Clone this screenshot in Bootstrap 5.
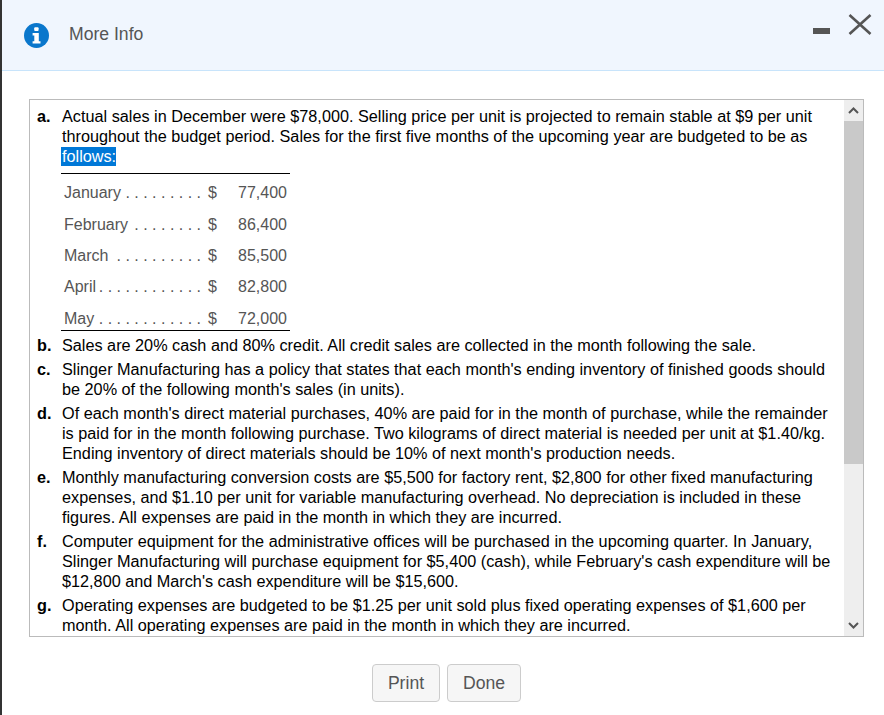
<!DOCTYPE html>
<html lang="en">
<head>
<meta charset="UTF-8">
<meta name="viewport" content="width=device-width, initial-scale=1.0">
<title>More Info</title>
<link href="https://cdn.jsdelivr.net/npm/bootstrap@5.3.3/dist/css/bootstrap.min.css" rel="stylesheet">
<style>
html, body { height: 100%; }
body { font-family: "Liberation Sans", Arial, sans-serif; font-size: 16.24px; line-height: 20px; color: #000; background: #fff; border-left: 2px solid #333; overflow: hidden; }
.info-head { height: 71px; background: #f0f6fe; border-bottom: 1px solid #c8e4fb; padding-left: 22px; padding-right: 12px; }
.info-title { font-size: 17.6px; color: #555; margin-left: 20px; margin-top: -2px; }
.win-btn { background: none; border: 0; padding: 0; line-height: 0; }
.win-group { margin-bottom: 21px; }
.win-min { margin-top: 14px; }
.win-close { margin-left: 18px; }
.scroll-box { height: 538px; margin: 28px 20px 0 27px; border: 1px solid #bbb; }
.scroll-body { padding: 6px 2px 0 7px; }
.item-row { margin-bottom: 4px; }
.item-key { flex: 0 0 25px; font-weight: 700; }
.picked { background: #0078d7; color: #fff; display: inline-block; height: 19px; line-height: 19px; margin-left: -1px; padding-left: 1px; }
.sales-table { width: 229px; margin: 7px 0 0 -1px; border-top: 1px solid #000; border-bottom: 1px solid #000; color: #555; font-size: 16px; border-collapse: separate; border-spacing: 0; }
.sales-table td { height: 31px; padding: 6px 0 0; vertical-align: middle; white-space: nowrap; }
.sales-table tr:first-child td { height: 32px; }
.sales-table tr:last-child td { padding-top: 8px; }
.sales-name { width: 144px; padding-left: 3px !important; padding-right: 4px !important; }
.sales-cur { width: 30px; padding-left: 3px !important; }
.sales-amt { text-align: right; padding-right: 3px !important; }
.fake-bar { flex: 0 0 19px; background: #eee; }
.bar-arrow { height: 21px; }
.bar-thumb { height: 343px; background: #c9c9c9; }
.foot-btn { font-family: inherit; font-size: 17.6px; line-height: 20px; color: #555; background: #f6f6f6; border: 1px solid #ccc; border-radius: 4px; padding: 8px 15px; height: 38px; }
.foot-btn:hover { color: #555; background: #f6f6f6; border-color: #ccc; }
.foot-row { margin-top: 27px; padding-left: 7px; gap: 7px; }
</style>
</head>
<body>

<!-- header -->
<div class="info-head d-flex align-items-center">
  <svg width="25" height="25" viewBox="0 0 25 25">
    <circle cx="12.5" cy="12.5" r="12.5" fill="#0a77cc"/>
    <rect x="10.2" y="4.2" width="4.4" height="3.8" rx="1" fill="#fff"/>
    <path d="M8.6 10h6.2v8.2h1.7v2.4H8.6v-2.4h1.7v-5.8H8.6z" fill="#fff"/>
  </svg>
  <div class="info-title">More Info</div>
  <div class="win-group ms-auto d-flex align-items-start">
    <button class="win-btn win-min" type="button" aria-label="Minimize">
      <svg width="17" height="6" viewBox="0 0 17 6"><rect width="17" height="6" fill="#555"/></svg>
    </button>
    <button class="win-btn win-close" type="button" aria-label="Close">
      <svg width="24" height="21" viewBox="0 0 24 21"><path d="M1.500 1l21 19M22.500 1l-21 19" stroke="#555" stroke-width="2.600" fill="none"/></svg>
    </button>
  </div>
</div>

<!-- scrolling text -->
<div class="scroll-box d-flex">
  <div class="scroll-body flex-grow-1 overflow-hidden">
    <div class="item-row d-flex">
      <div class="item-key">a.</div>
      <div>
        Actual sales in December were $78,000. Selling price per unit is projected to remain stable at $9 per unit throughout the budget period. Sales for the first five months of the upcoming year are budgeted to be as <span class="picked">follows:</span>
        <table class="sales-table">
          <tr><td class="sales-name"><div class="d-flex justify-content-between"><span>January</span><span>. . . . . . . . .</span></div></td><td class="sales-cur">$</td><td class="sales-amt">77,400</td></tr>
          <tr><td class="sales-name"><div class="d-flex justify-content-between"><span>February</span><span>. . . . . . . .</span></div></td><td class="sales-cur">$</td><td class="sales-amt">86,400</td></tr>
          <tr><td class="sales-name"><div class="d-flex justify-content-between"><span>March</span><span>. . . . . . . . . .</span></div></td><td class="sales-cur">$</td><td class="sales-amt">85,500</td></tr>
          <tr><td class="sales-name"><div class="d-flex justify-content-between"><span>April</span><span>. . . . . . . . . . . .</span></div></td><td class="sales-cur">$</td><td class="sales-amt">82,800</td></tr>
          <tr><td class="sales-name"><div class="d-flex justify-content-between"><span>May</span><span>. . . . . . . . . . . .</span></div></td><td class="sales-cur">$</td><td class="sales-amt">72,000</td></tr>
        </table>
      </div>
    </div>
    <div class="item-row d-flex"><div class="item-key">b.</div><div>Sales are 20% cash and 80% credit. All credit sales are collected in the month following the sale.</div></div>
    <div class="item-row d-flex"><div class="item-key">c.</div><div>Slinger Manufacturing has a policy that states that each month's ending inventory of finished goods should be 20% of the following month's sales (in units).</div></div>
    <div class="item-row d-flex"><div class="item-key">d.</div><div>Of each month's direct material purchases, 40% are paid for in the month of purchase, while the remainder is paid for in the month following purchase. Two kilograms of direct material is needed per unit at $1.40/kg. Ending inventory of direct materials should be 10% of next month's production needs.</div></div>
    <div class="item-row d-flex"><div class="item-key">e.</div><div>Monthly manufacturing conversion costs are $5,500 for factory rent, $2,800 for other fixed manufacturing expenses, and $1.10 per unit for variable manufacturing overhead. No depreciation is included in these figures. All expenses are paid in the month in which they are incurred.</div></div>
    <div class="item-row d-flex"><div class="item-key">f.</div><div>Computer equipment for the administrative offices will be purchased in the upcoming quarter. In January, Slinger Manufacturing will purchase equipment for $5,400 (cash), while February's cash expenditure will be $12,800 and March's cash expenditure will be $15,600.</div></div>
    <div class="item-row d-flex"><div class="item-key">g.</div><div>Operating expenses are budgeted to be $1.25 per unit sold plus fixed operating expenses of $1,600 per month. All operating expenses are paid in the month in which they are incurred.</div></div>
  </div>
  <div class="fake-bar d-flex flex-column">
    <div class="bar-arrow d-flex align-items-center justify-content-center">
      <svg width="11" height="7" viewBox="0 0 11 7"><path d="M1 6l4.500-4.500L10 6" stroke="#555" stroke-width="2" fill="none"/></svg>
    </div>
    <div class="bar-thumb"></div>
    <div class="mt-auto bar-arrow d-flex align-items-center justify-content-center">
      <svg width="11" height="7" viewBox="0 0 11 7"><path d="M1 1l4.500 4.500L10 1" stroke="#555" stroke-width="2" fill="none"/></svg>
    </div>
  </div>
</div>

<!-- buttons -->
<div class="foot-row d-flex justify-content-center">
  <button class="btn foot-btn" type="button">Print</button>
  <button class="btn foot-btn" type="button">Done</button>
</div>

<script src="https://cdn.jsdelivr.net/npm/bootstrap@5.3.3/dist/js/bootstrap.bundle.min.js"></script>
</body>
</html>
